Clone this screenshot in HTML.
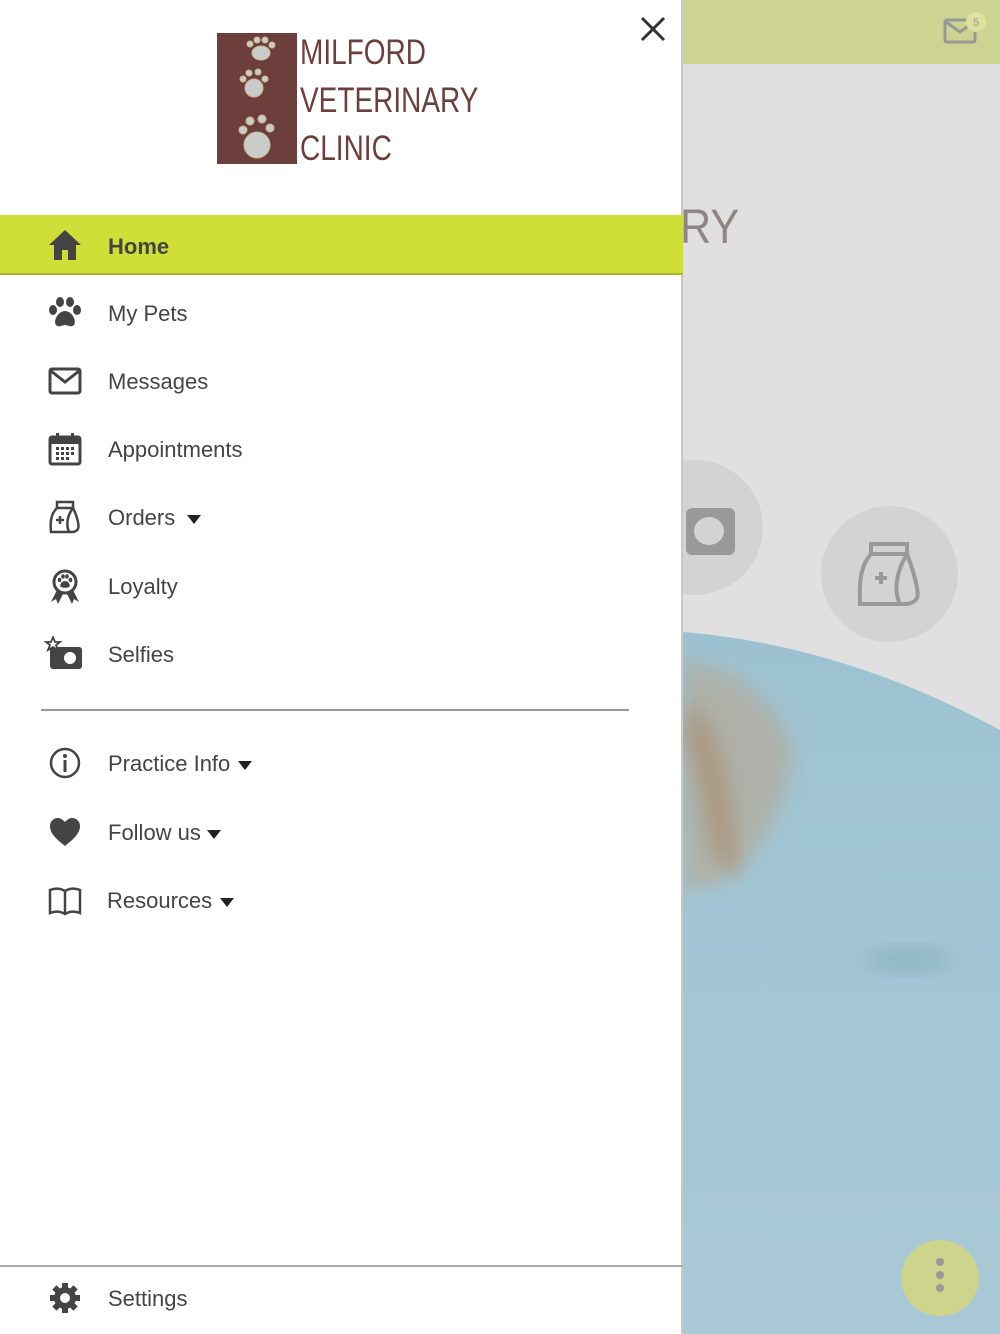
<!DOCTYPE html>
<html><head><meta charset="utf-8"><style>
*{margin:0;padding:0;box-sizing:border-box}
body{width:1000px;height:1334px;position:relative;overflow:hidden;background:#e0e0e0;font-family:"Liberation Sans",Roboto,sans-serif}
.drawer{position:absolute;left:0;top:0;width:683px;height:1334px;background:#fff;border-right:2px solid #c8c8c8}
.item{position:absolute;left:0;width:683px;height:60px;display:flex;align-items:center;font-size:22px;color:#444}
.item .ic{position:absolute;left:47px;width:36px;height:36px;top:12px}
.item .t{position:absolute;left:108px;top:18px}
.tri{display:inline-block;width:0;height:0;border-left:7px solid transparent;border-right:7px solid transparent;border-top:9px solid #222;margin-left:12px;vertical-align:middle}
</style></head><body>
<div style="position:absolute;left:683px;top:0;width:317px;height:64px;background:#cdd391"></div>
<svg style="position:absolute;left:942px;top:12px" width="50" height="40"><rect x="3" y="8" width="30" height="22" rx="2" fill="none" stroke="#999" stroke-width="3"/><path d="M4 10 L18 20 L32 10" fill="none" stroke="#999" stroke-width="3"/><circle cx="34" cy="10" r="10" fill="#dfe09c"/><text x="34" y="14" font-size="11" fill="#999" text-anchor="middle" font-family="Liberation Sans">5</text></svg>
<div style="position:absolute;left:680px;top:200px;font-size:48px;line-height:56px;color:#8f8585;transform:scaleX(0.9);transform-origin:left">RY</div>
<div style="position:absolute;left:626px;top:460px;width:137px;height:135px;border-radius:50%;background:#d3d3d3"></div>
<div style="position:absolute;left:686px;top:508px;width:49px;height:47px;border-radius:6px;background:#999"></div>
<div style="position:absolute;left:694px;top:517px;width:30px;height:28px;border-radius:50%;background:#d3d3d3"></div>
<div style="position:absolute;left:821px;top:506px;width:137px;height:136px;border-radius:50%;background:#d3d3d3"></div>
<svg style="position:absolute;left:855px;top:540px" width="70" height="70" viewBox="0 0 70 70"><g fill="none" stroke="#999" stroke-width="4"><rect x="16" y="4" width="36" height="10"/><path d="M16 14 C6 25 4 40 5 64 L52 64 C62 62 64 58 62 48 C60 36 55 22 52 14"/><path d="M52 14 C42 30 38 50 45 64"/><path d="M20 38 h12 M26 32 v12"/></g></svg>
<svg style="position:absolute;left:683px;top:630px" width="317" height="704">
<defs><linearGradient id="w" x1="0" y1="0" x2="0" y2="1"><stop offset="0" stop-color="#9cc2d2"/><stop offset=".4" stop-color="#a2c6d5"/><stop offset="1" stop-color="#a9c8d5"/></linearGradient>
<filter id="b"><feGaussianBlur stdDeviation="10"/></filter></defs>
<path d="M0 2 Q160 15 317 100 L317 704 L0 704 Z" fill="url(#w)"/>
<path d="M0 30 Q80 40 110 120 Q100 190 60 240 Q30 260 0 260 Z" fill="#b4ab9b" opacity=".75" filter="url(#b)"/>
<path d="M5 70 Q45 100 55 240 Q35 245 25 200 Q15 140 0 110 Z" fill="#a88f70" opacity=".7" filter="url(#b)"/>
<ellipse cx="225" cy="330" rx="45" ry="14" fill="#90b6c6" filter="url(#b)"/>
<ellipse cx="257" cy="648" rx="39" ry="38" fill="#cdd48c"/>
<circle cx="257" cy="632" r="4" fill="#999"/><circle cx="257" cy="645" r="4" fill="#999"/><circle cx="257" cy="658" r="4" fill="#999"/>
</svg>

<div class="drawer">
<svg style="position:absolute;left:217px;top:33px" width="80" height="131"><rect width="80" height="131" fill="#6c3f3c"/>
<g fill="#c9ccc8" stroke="#c9b98a" stroke-width="1"><ellipse cx="44" cy="20" rx="9" ry="7"/><circle cx="33" cy="11" r="3"/><circle cx="40" cy="7" r="3"/><circle cx="48" cy="7" r="3"/><circle cx="55" cy="12" r="3"/>
<ellipse cx="37" cy="55" rx="9" ry="9"/><circle cx="26" cy="46" r="3"/><circle cx="32" cy="40" r="3"/><circle cx="41" cy="39" r="3"/><circle cx="48" cy="46" r="3"/>
<ellipse cx="40" cy="112" rx="13" ry="13"/><circle cx="26" cy="97" r="4"/><circle cx="33" cy="88" r="4"/><circle cx="45" cy="86" r="4"/><circle cx="53" cy="95" r="4"/></g></svg>
<div style="position:absolute;left:300px;top:29px;font-size:35px;line-height:48px;color:#6c3f3c;transform:scaleX(0.8);transform-origin:left">MILFORD<br>VETERINARY<br>CLINIC</div>
<svg style="position:absolute;left:639px;top:15px" width="28" height="28"><path d="M3 3 L25 25 M25 3 L3 25" stroke="#333" stroke-width="3"/></svg>

<div class="item" style="top:215px;background:#cfdf38;border-bottom:2px solid #a8b52a"><svg class="ic" viewBox="0 0 36 36"><path d="M18 3 L2 18 H7 V33 H15 V23 H21 V33 H29 V18 H34 Z" fill="#444"/></svg><span class="t" style="font-weight:bold;color:#444;top:19px">Home</span></div>
<div class="item" style="top:283px"><svg class="ic" viewBox="0 0 36 36"><g fill="#444"><ellipse cx="6" cy="15" rx="4" ry="5"/><ellipse cx="13" cy="7" rx="4" ry="5"/><ellipse cx="23" cy="7" rx="4" ry="5"/><ellipse cx="30" cy="15" rx="4" ry="5"/><path d="M18 16 C11 16 6 26 9 30 C12 33 15 30 18 30 C21 30 24 33 27 30 C30 26 25 16 18 16Z"/></g></svg><span class="t">My Pets</span></div>
<div class="item" style="top:351px"><svg class="ic" viewBox="0 0 36 36"><rect x="3" y="6" width="30" height="24" rx="2" fill="none" stroke="#444" stroke-width="3"/><path d="M4 8 L18 19 L32 8" fill="none" stroke="#444" stroke-width="3"/></svg><span class="t">Messages</span></div>
<div class="item" style="top:419px"><svg class="ic" viewBox="0 0 36 36"><rect x="3" y="6" width="30" height="27" rx="2" fill="none" stroke="#444" stroke-width="3"/><rect x="3" y="6" width="30" height="7" fill="#444"/><rect x="9" y="2" width="3" height="7" fill="#444"/><rect x="24" y="2" width="3" height="7" fill="#444"/><g fill="#444"><rect x="9" y="16" width="3" height="3"/><rect x="14" y="16" width="3" height="3"/><rect x="19" y="16" width="3" height="3"/><rect x="24" y="16" width="3" height="3"/><rect x="9" y="21" width="3" height="3"/><rect x="14" y="21" width="3" height="3"/><rect x="19" y="21" width="3" height="3"/><rect x="24" y="21" width="3" height="3"/><rect x="9" y="26" width="3" height="3"/><rect x="14" y="26" width="3" height="3"/><rect x="19" y="26" width="3" height="3"/></g></svg><span class="t">Appointments</span></div>
<div class="item" style="top:487px"><svg class="ic" viewBox="0 0 36 36"><g fill="none" stroke="#444" stroke-width="2.5"><rect x="10" y="3" width="16" height="6"/><path d="M10 9 C4 15 3 22 4 33 L26 33 C32 32 32 28 31 23 C30 18 28 13 26 9"/><path d="M26 9 C20 17 19 26 22 33"/><path d="M9 21 h8 M13 17 v8"/></g></svg><span class="t">Orders<span class="tri"></span></span></div>
<div class="item" style="top:556px"><svg class="ic" viewBox="0 0 36 36"><g fill="#444"><path d="M10 22 L4 34 L9 31 L11 36 L16 26Z"/><path d="M26 22 L32 34 L27 31 L25 36 L20 26Z"/></g><circle cx="18" cy="14" r="11" fill="#fff" stroke="#444" stroke-width="3"/><g fill="#444"><ellipse cx="12.5" cy="12" rx="1.8" ry="2.2"/><ellipse cx="16" cy="8.5" rx="1.8" ry="2.2"/><ellipse cx="20" cy="8.5" rx="1.8" ry="2.2"/><ellipse cx="23.5" cy="12" rx="1.8" ry="2.2"/><path d="M18 13 C14 13 12 18 14 19 C16 20 20 20 22 19 C24 18 22 13 18 13Z"/></g></svg><span class="t">Loyalty</span></div>
<div class="item" style="top:624px"><svg class="ic" viewBox="0 0 36 36" style="left:44px;width:40px"><rect x="4" y="11" width="32" height="22" rx="3" fill="#444"/><circle cx="24" cy="22" r="6" fill="#fff"/><path d="M7 1 L9 6 L14 6 L10 9 L12 14 L7 11 L2 14 L4 9 L0 6 L5 6Z" fill="#fff" stroke="#444" stroke-width="1.8"/></svg><span class="t">Selfies</span></div>

<div style="position:absolute;left:41px;top:709px;width:588px;height:2px;background:#999"></div>

<div class="item" style="top:733px"><svg class="ic" viewBox="0 0 36 36"><circle cx="18" cy="18" r="14" fill="none" stroke="#444" stroke-width="2.5"/><circle cx="18" cy="11" r="2" fill="#444"/><rect x="16.5" y="15" width="3" height="12" fill="#444"/></svg><span class="t">Practice Info<span class="tri" style="margin-left:8px"></span></span></div>
<div class="item" style="top:802px"><svg class="ic" viewBox="0 0 36 36"><path d="M18 32 C8 24 3 19 3 12 C3 7 7 4 11 4 C14 4 16 6 18 8 C20 6 22 4 25 4 C29 4 33 7 33 12 C33 19 28 24 18 32Z" fill="#444"/></svg><span class="t">Follow us<span class="tri" style="margin-left:6px"></span></span></div>
<div class="item" style="top:870px"><svg class="ic" viewBox="0 0 36 36"><path d="M3 8 C8 6 13 6 18 9 C23 6 28 6 33 8 V31 C28 29 23 29 18 32 C13 29 8 29 3 31Z M18 9 V32" fill="none" stroke="#444" stroke-width="2.5"/></svg><span class="t" style="left:107px">Resources<span class="tri" style="margin-left:8px"></span></span></div>

<div style="position:absolute;left:0;top:1265px;width:683px;height:2px;background:#aaa"></div>
<div class="item" style="top:1268px"><svg class="ic" viewBox="0 0 36 36"><g fill="#444"><circle cx="18" cy="18" r="11"/><g stroke="#444" stroke-width="6"><path d="M18 3 V33 M3 18 H33 M7.4 7.4 L28.6 28.6 M28.6 7.4 L7.4 28.6"/></g></g><circle cx="18" cy="18" r="5" fill="#fff"/></svg><span class="t">Settings</span></div>
</div>
</body></html>
